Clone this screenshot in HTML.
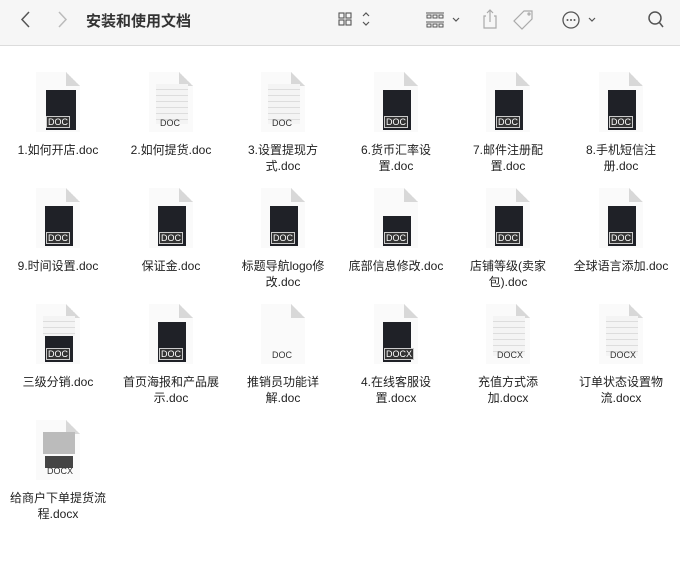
<!DOCTYPE html>
<html><head><meta charset="utf-8"><style>
body{margin:0;width:680px;height:561px;background:#fff;font-family:"Liberation Sans","Noto Sans CJK SC",sans-serif;position:relative;overflow:hidden}
.tb{position:absolute;left:0;top:0;width:680px;height:45px;background:#f6f6f6;border-bottom:1px solid #dcdcdc}
.title{position:absolute;left:86px;top:10px;font-size:15px;font-weight:bold;color:#333}
.it{position:absolute;width:112px;text-align:center}
.pg{position:relative;margin:0 auto;width:44px;height:60px;background:#fafafa;box-shadow:0 0 0 1px #e2e2e2,0 1px 2px rgba(0,0,0,.12);clip-path:polygon(0 0,30px 0,44px 14px,44px 60px,0 60px)}
.fold{position:absolute;right:0;top:0;width:14px;height:14px;background:linear-gradient(225deg,#fff 50%,#d8d8d8 50%)}
.dk{position:absolute;left:9px;top:18px;width:28px;height:40px;background:#1f2127}
.lt{position:absolute;left:7px;top:12px;width:32px;height:40px;background:repeating-linear-gradient(#f4f4f4 0 5px,#ddd 5px 6px)}
.dl{position:absolute;left:10px;bottom:4px;font-size:9px;color:#fff;background:#333;padding:0 1px;line-height:10px;border:1px solid #ccc}
.dl.w{color:#333;background:transparent;border:none}
.lb{font-size:12px;color:#222;line-height:16px;margin-top:10px}
</style></head><body>
<div class="tb">
<svg width="680" height="45" style="position:absolute;left:0;top:0" fill="none" stroke="#555" stroke-width="1.5">
<path d="M29 12 L22 19.5 L29 27"/>
<path d="M59 12 L66 19.5 L59 27" stroke="#bbb"/>
<g stroke-width="1.1"><rect x="339" y="13" width="5" height="5"/><rect x="346" y="13" width="5" height="5"/><rect x="339" y="20" width="5" height="5"/><rect x="346" y="20" width="5" height="5"/></g>
<path d="M363 16 l3 -3 l3 3 M363 22 l3 3 l3 -3" stroke-width="1.2"/>
<g stroke-width="1"><path d="M426 13h18M426 22h18"/><rect x="427" y="15" width="4" height="3"/><rect x="433" y="15" width="4" height="3"/><rect x="439" y="15" width="4" height="3"/><rect x="427" y="24" width="4" height="3"/><rect x="433" y="24" width="4" height="3"/><rect x="439" y="24" width="4" height="3"/></g>
<path d="M453 18 l3 3 l3 -3" stroke-width="1.2"/>
<g stroke="#aaa" stroke-width="1.2"><path d="M486 16h-2v12h12v-12h-2M490 22v-12M487 13l3-3l3 3"/>
<path d="M524 11h8v8l-10 10l-8-8z"/><circle cx="529" cy="14" r="1"/></g>
<circle cx="571" cy="20" r="8" stroke-width="1.3"/><g fill="#555" stroke="none"><circle cx="567.5" cy="20" r="1"/><circle cx="571" cy="20" r="1"/><circle cx="574.5" cy="20" r="1"/></g>
<path d="M589 18 l3 3 l3 -3" stroke-width="1.2"/>
<circle cx="655" cy="18" r="6" stroke-width="1.5"/><path d="M659 22l4 5"/>
</svg>
<div class="title">安装和使用文档</div>
</div>

<div class="it" style="left:2px;top:72px"><div class="pg"><div class="fold"></div><div class="dk" style="left:10px;width:30px;top:18px"></div><span class="dl">DOC</span></div><div class="lb">1.如何开店.doc</div></div>
<div class="it" style="left:115px;top:72px"><div class="pg"><div class="fold"></div><div class="lt"></div><span class="dl w">DOC</span></div><div class="lb">2.如何提货.doc</div></div>
<div class="it" style="left:227px;top:72px"><div class="pg"><div class="fold"></div><div class="lt"></div><span class="dl w">DOC</span></div><div class="lb">3.设置提现方<br>式.doc</div></div>
<div class="it" style="left:340px;top:72px"><div class="pg"><div class="fold"></div><div class="dk"></div><span class="dl">DOC</span></div><div class="lb">6.货币汇率设<br>置.doc</div></div>
<div class="it" style="left:452px;top:72px"><div class="pg"><div class="fold"></div><div class="dk"></div><span class="dl">DOC</span></div><div class="lb">7.邮件注册配<br>置.doc</div></div>
<div class="it" style="left:565px;top:72px"><div class="pg"><div class="fold"></div><div class="dk"></div><span class="dl">DOC</span></div><div class="lb">8.手机短信注<br>册.doc</div></div>

<div class="it" style="left:2px;top:188px"><div class="pg"><div class="fold"></div><div class="dk"></div><span class="dl">DOC</span></div><div class="lb">9.时间设置.doc</div></div>
<div class="it" style="left:115px;top:188px"><div class="pg"><div class="fold"></div><div class="dk"></div><span class="dl">DOC</span></div><div class="lb">保证金.doc</div></div>
<div class="it" style="left:227px;top:188px"><div class="pg"><div class="fold"></div><div class="dk"></div><span class="dl">DOC</span></div><div class="lb">标题导航logo修<br>改.doc</div></div>
<div class="it" style="left:340px;top:188px"><div class="pg"><div class="fold"></div><div class="dk" style="top:28px;height:30px"></div><span class="dl">DOC</span></div><div class="lb">底部信息修改.doc</div></div>
<div class="it" style="left:452px;top:188px"><div class="pg"><div class="fold"></div><div class="dk"></div><span class="dl">DOC</span></div><div class="lb">店铺等级(卖家<br>包).doc</div></div>
<div class="it" style="left:565px;top:188px"><div class="pg"><div class="fold"></div><div class="dk"></div><span class="dl">DOC</span></div><div class="lb">全球语言添加.doc</div></div>

<div class="it" style="left:2px;top:304px"><div class="pg"><div class="fold"></div><div class="lt" style="height:20px"></div><div class="dk" style="top:32px;height:26px"></div><span class="dl">DOC</span></div><div class="lb">三级分销.doc</div></div>
<div class="it" style="left:115px;top:304px"><div class="pg"><div class="fold"></div><div class="dk"></div><span class="dl">DOC</span></div><div class="lb">首页海报和产品展<br>示.doc</div></div>
<div class="it" style="left:227px;top:304px"><div class="pg"><div class="fold"></div><span class="dl w">DOC</span></div><div class="lb">推销员功能详<br>解.doc</div></div>
<div class="it" style="left:340px;top:304px"><div class="pg"><div class="fold"></div><div class="dk"></div><span class="dl">DOCX</span></div><div class="lb">4.在线客服设<br>置.docx</div></div>
<div class="it" style="left:452px;top:304px"><div class="pg"><div class="fold"></div><div class="lt"></div><span class="dl w">DOCX</span></div><div class="lb">充值方式添<br>加.docx</div></div>
<div class="it" style="left:565px;top:304px"><div class="pg"><div class="fold"></div><div class="lt"></div><span class="dl w">DOCX</span></div><div class="lb">订单状态设置物<br>流.docx</div></div>

<div class="it" style="left:2px;top:420px"><div class="pg"><div class="fold"></div><div class="lt" style="background:#bbb;height:22px"></div><div class="dk" style="top:36px;height:12px;background:#444"></div><span class="dl w">DOCX</span></div><div class="lb">给商户下单提货流<br>程.docx</div></div>
</body></html>
